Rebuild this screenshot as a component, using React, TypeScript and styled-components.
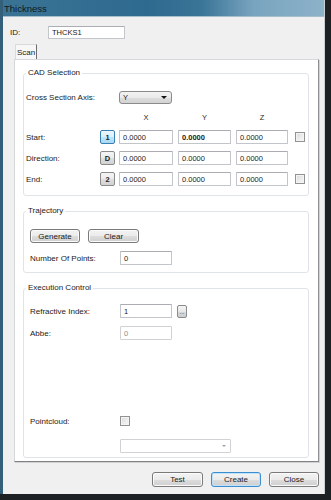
import React from "react";
import styled, { createGlobalStyle, css } from "styled-components";

const Global = createGlobalStyle`
  html, body { margin: 0; padding: 0; background: #1d2124; }
  body { width: 331px; height: 500px; overflow: hidden; font-family: "Liberation Sans", Arial, sans-serif; }
  * { box-sizing: border-box; }
`;

const Window = styled.div`
  width: 325px;
  height: 494px;
  display: flex;
  flex-direction: column;
  background: #f0f0f0;
  border-left: 3px solid #345f7b;
  border-right: 1px solid #c9d0d4;
  font-size: 8px;
  color: #1b1b1b;
`;

const TitleBar = styled.div`
  height: 17px;
  flex: none;
  display: flex;
  align-items: center;
  padding-left: 1px;
  background: linear-gradient(90deg, #3a7394 0%, #2e6a8f 45%, #3a7597 62%, #79a4bf 78%, #8cb2c9 100%);
  border-bottom: 1px solid #a7bfcd;
  font-size: 9.5px;
  color: #0e1920;
`;

const Body = styled.div`
  flex: 1;
  display: flex;
  flex-direction: column;
  padding: 9px 5px 7px 7px;
`;

const IdRow = styled.div`
  display: flex;
  align-items: center;
  height: 13px;
`;

const Label = styled.span<{ $w?: number }>`
  flex: none;
  width: ${(p) => (p.$w ? `${p.$w}px` : "auto")};
  font-size: 8px;
  color: #1b1b1b;
  white-space: nowrap;
`;

const TextInput = styled.input<{ $w: number; $h?: number; $bold?: boolean }>`
  flex: none;
  width: ${(p) => p.$w}px;
  height: ${(p) => p.$h ?? 14}px;
  margin: 0;
  padding: 0 3px;
  border: 1px solid #c2c5ca;
  border-top-color: #abadb3;
  border-radius: 1px;
  background: #fff;
  font-family: "Liberation Sans", Arial, sans-serif;
  font-size: 7.5px;
  font-weight: ${(p) => (p.$bold ? 700 : 400)};
  color: #1b1b1b;
  outline: none;
  &:disabled {
    border-color: #cfd1d4;
    color: #8c8c8c;
  }
`;

const TabBar = styled.div`
  display: flex;
  margin-top: 5px;
  padding-left: 5px;
  height: 15px;
`;

const Tab = styled.div`
  width: 22px;
  height: 15px;
  display: flex;
  align-items: center;
  justify-content: center;
  background: #f7f7f7;
  border: 1px solid #dadada;
  border-bottom: none;
  border-right: 1px solid #6e6e6e;
  font-size: 8px;
`;

const Panel = styled.div`
  flex: 1;
  display: flex;
  flex-direction: column;
  gap: 10px;
  margin-left: 4px;
  padding: 8px 9px 3px 8px;
  background: #fff;
  border: 1px solid #d6d9dc;
  border-right-color: #8d8f92;
  border-bottom-color: #7f8184;
  box-shadow: 1px 1px 0 #d2d2d2;
`;

const Group = styled.fieldset<{ $grow?: boolean }>`
  margin: 0;
  padding: 0;
  min-width: 0;
  border: 1px solid #dfe4e8;
  border-radius: 3px;
  ${(p) =>
    p.$grow &&
    css`
      flex: 1;
      display: flex;
      flex-direction: column;
    `}
`;

const Legend = styled.legend`
  margin-left: 2px;
  padding: 0 2px;
  font-size: 8px;
  line-height: 10px;
  color: #1b1b1b;
`;

const GroupBody = styled.div<{ $pt: number; $pl: number; $pb: number; $grow?: boolean }>`
  display: flex;
  flex-direction: column;
  padding: ${(p) => `${p.$pt}px 0 ${p.$pb}px ${p.$pl}px`};
  ${(p) =>
    p.$grow &&
    css`
      flex: 1;
    `}
`;

const CadGrid = styled.div`
  display: grid;
  grid-template-columns: 74px 19px 59px 58px 59px 10px;
  grid-template-rows: 13px 12px 14px 14px 14px;
  row-gap: 7px;
  align-items: center;
`;

const AxisLabel = styled(Label)`
  grid-column: 1 / 3;
`;

const Header = styled.span<{ $w: number }>`
  width: ${(p) => p.$w}px;
  text-align: center;
  font-size: 7.5px;
  color: #2a2a2a;
`;

const Combo = styled.div<{ $w: number; $disabled?: boolean }>`
  width: ${(p) => p.$w}px;
  height: ${(p) => (p.$disabled ? 14 : 13)}px;
  display: flex;
  align-items: center;
  justify-content: space-between;
  padding: 0 4px 0 3px;
  border: 1px solid ${(p) => (p.$disabled ? "#d0d2d5" : "#8a8a8a")};
  border-radius: ${(p) => (p.$disabled ? 1 : 3)}px;
  background: ${(p) =>
    p.$disabled ? "#fff" : "linear-gradient(#f2f2f2 0%, #ebebeb 50%, #dddddd 51%, #d3d3d3 100%)"};
  font-size: 7.5px;
`;

const Arrow = styled.span<{ $muted?: boolean }>`
  width: 0;
  height: 0;
  border-left: ${(p) => (p.$muted ? 2 : 3)}px solid transparent;
  border-right: ${(p) => (p.$muted ? 2 : 3)}px solid transparent;
  border-top: ${(p) => (p.$muted ? 2 : 3)}px solid ${(p) => (p.$muted ? "#a2a2a2" : "#111")};
`;

const PickButton = styled.div<{ $active?: boolean }>`
  width: 15px;
  height: 14px;
  display: flex;
  align-items: center;
  justify-content: center;
  border: 1px solid ${(p) => (p.$active ? "#3c7fb1" : "#8b8b8b")};
  border-radius: 2px;
  background: ${(p) =>
    p.$active
      ? "linear-gradient(#eaf6fd 0%, #d9f0fc 50%, #bee6fd 51%, #a7d9f5 100%)"
      : "linear-gradient(#f4f4f4 0%, #ececec 50%, #dedede 51%, #d2d2d2 100%)"};
  font-size: 7.5px;
  font-weight: 700;
  color: #222;
`;

const Check = styled.div`
  width: 10px;
  height: 10px;
  border: 1px solid #909293;
  background: linear-gradient(135deg, #d8d9da 0%, #eeeeee 60%, #f7f7f7 100%);
  box-shadow: inset 0 0 0 1px #f4f4f4;
`;

const Row = styled.div<{ $mt?: number }>`
  display: flex;
  align-items: center;
  height: 14px;
  margin-top: ${(p) => p.$mt ?? 0}px;
`;

const Spacer = styled.div`
  flex: 1;
`;

const Button = styled.div<{ $w: number; $h?: number; $default?: boolean }>`
  flex: none;
  width: ${(p) => p.$w}px;
  height: ${(p) => p.$h ?? 14}px;
  display: flex;
  align-items: center;
  justify-content: center;
  border: 1px solid ${(p) => (p.$default ? "#3c8cd0" : "#7a7a7a")};
  border-radius: 3px;
  background: linear-gradient(#f3f3f3 0%, #ebebeb 50%, #dddddd 51%, #cfcfcf 100%);
  box-shadow: ${(p) => (p.$default ? "inset 0 0 0 1px #bfe3fa" : "inset 0 0 0 1px #fbfbfb")};
  font-size: 8px;
  color: #1b1b1b;
`;

const DotsButton = styled.div`
  width: 10px;
  height: 13px;
  margin-left: 5px;
  display: flex;
  align-items: flex-end;
  justify-content: center;
  padding-bottom: 2px;
  border: 1px solid #8b8b8b;
  border-radius: 2px;
  background: linear-gradient(#f4f4f4 0%, #e8e8e8 50%, #dadada 51%, #cecece 100%);
  font-size: 6px;
  line-height: 6px;
  color: #222;
`;

const ButtonRow = styled.div`
  display: flex;
  justify-content: flex-end;
  gap: 8px;
  margin-top: 10px;
  height: 15px;
`;

const coords = [
  { label: "Start:", key: "1", active: true, values: ["0.0000", "0.0000", "0.0000"], check: true },
  { label: "Direction:", key: "D", active: false, values: ["0.0000", "0.0000", "0.0000"], check: false },
  { label: "End:", key: "2", active: false, values: ["0.0000", "0.0000", "0.0000"], check: true },
];

const widths = [54, 53, 52];

export default function App() {
  return (
    <>
      <Global />
      <Window>
        <TitleBar>Thickness</TitleBar>
        <Body>
          <IdRow>
            <Label $w={38}>ID:</Label>
            <TextInput $w={77} $h={13} readOnly value="THCKS1" />
          </IdRow>
          <TabBar>
            <Tab>Scan</Tab>
          </TabBar>
          <Panel>
            <Group>
              <Legend>CAD Selection</Legend>
              <GroupBody $pt={13} $pl={2} $pb={9}>
                <CadGrid>
                  <AxisLabel>Cross Section Axis:</AxisLabel>
                  <Combo $w={53}>
                    <span>Y</span>
                    <Arrow />
                  </Combo>
                  <span />
                  <span />
                  <span />
                  <span />
                  <span />
                  <Header $w={54}>X</Header>
                  <Header $w={53}>Y</Header>
                  <Header $w={52}>Z</Header>
                  <span />
                  {coords.map((c) => (
                    <React.Fragment key={c.label}>
                      <Label>{c.label}</Label>
                      <PickButton $active={c.active}>{c.key}</PickButton>
                      {c.values.map((v, i) => (
                        <TextInput
                          key={i}
                          $w={widths[i]}
                          $bold={c.active && i === 1}
                          readOnly
                          value={v}
                        />
                      ))}
                      {c.check ? <Check /> : <span />}
                    </React.Fragment>
                  ))}
                </CadGrid>
              </GroupBody>
            </Group>

            <Group>
              <Legend>Trajectory</Legend>
              <GroupBody $pt={13} $pl={6} $pb={7}>
                <Row>
                  <Button $w={50}>Generate</Button>
                  <Button $w={51} style={{ marginLeft: 8 }}>
                    Clear
                  </Button>
                </Row>
                <Row $mt={8}>
                  <Label $w={90}>Number Of Points:</Label>
                  <TextInput $w={52} readOnly value="0" />
                </Row>
              </GroupBody>
            </Group>

            <Group $grow>
              <Legend>Execution Control</Legend>
              <GroupBody $pt={11} $pl={6} $pb={4} $grow>
                <Row>
                  <Label $w={90}>Refractive Index:</Label>
                  <TextInput $w={52} readOnly value="1" />
                  <DotsButton>...</DotsButton>
                </Row>
                <Row $mt={8}>
                  <Label $w={90}>Abbe:</Label>
                  <TextInput $w={52} disabled value="0" readOnly />
                </Row>
                <Spacer />
                <Row>
                  <Label $w={90}>Pointcloud:</Label>
                  <Check />
                </Row>
                <Row $mt={11}>
                  <Label $w={90} />
                  <Combo $w={111} $disabled>
                    <span />
                    <Arrow $muted />
                  </Combo>
                </Row>
              </GroupBody>
            </Group>
          </Panel>
          <ButtonRow>
            <Button $w={51} $h={15}>Test</Button>
            <Button $w={50} $h={15} $default>
              Create
            </Button>
            <Button $w={50} $h={15}>Close</Button>
          </ButtonRow>
        </Body>
      </Window>
    </>
  );
}
